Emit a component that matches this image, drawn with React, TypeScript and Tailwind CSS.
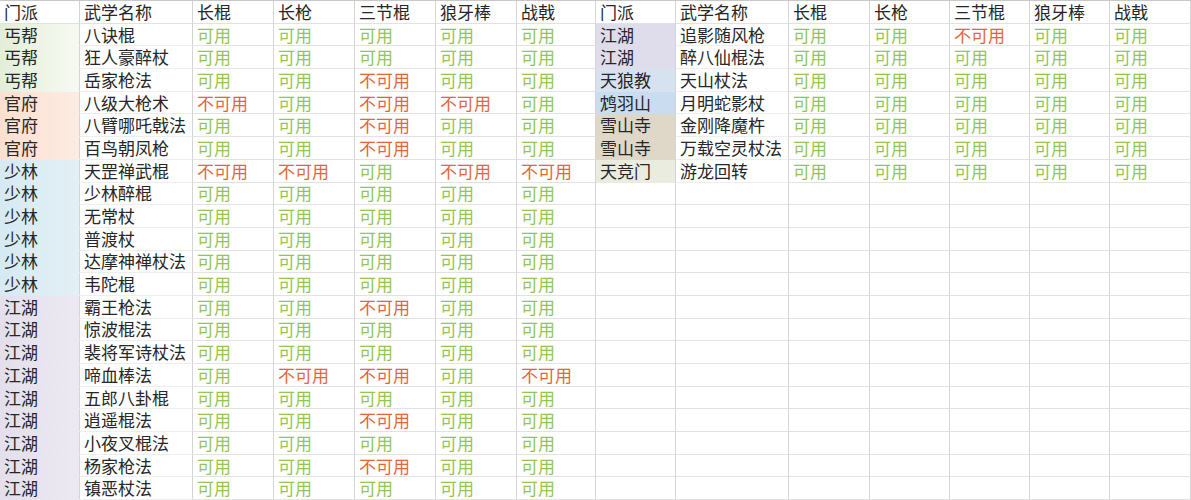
import React from "react";

const weapons = ["长棍", "长枪", "三节棍", "狼牙棒", "战戟"];

// 1 = 可用, 0 = 不可用
const leftRows: [string, string, number[]][] = [
  ["丐帮", "八诀棍", [1, 1, 1, 1, 1]],
  ["丐帮", "狂人豪醉杖", [1, 1, 1, 1, 1]],
  ["丐帮", "岳家枪法", [1, 1, 0, 1, 1]],
  ["官府", "八级大枪术", [0, 1, 0, 0, 1]],
  ["官府", "八臂哪吒戟法", [1, 1, 0, 1, 1]],
  ["官府", "百鸟朝凤枪", [1, 1, 0, 1, 1]],
  ["少林", "天罡禅武棍", [0, 0, 1, 0, 0]],
  ["少林", "少林醉棍", [1, 1, 1, 1, 1]],
  ["少林", "无常杖", [1, 1, 1, 1, 1]],
  ["少林", "普渡杖", [1, 1, 1, 1, 1]],
  ["少林", "达摩神禅杖法", [1, 1, 1, 1, 1]],
  ["少林", "韦陀棍", [1, 1, 1, 1, 1]],
  ["江湖", "霸王枪法", [1, 1, 0, 1, 1]],
  ["江湖", "惊波棍法", [1, 1, 1, 1, 1]],
  ["江湖", "裴将军诗杖法", [1, 1, 1, 1, 1]],
  ["江湖", "啼血棒法", [1, 0, 0, 1, 0]],
  ["江湖", "五郎八卦棍", [1, 1, 1, 1, 1]],
  ["江湖", "逍遥棍法", [1, 1, 0, 1, 1]],
  ["江湖", "小夜叉棍法", [1, 1, 1, 1, 1]],
  ["江湖", "杨家枪法", [1, 1, 0, 1, 1]],
  ["江湖", "镇恶杖法", [1, 1, 1, 1, 1]],
];

const rightRows: [string, string, number[]][] = [
  ["江湖", "追影随风枪", [1, 1, 0, 1, 1]],
  ["江湖", "醉八仙棍法", [1, 1, 1, 1, 1]],
  ["天狼教", "天山杖法", [1, 1, 1, 1, 1]],
  ["鸩羽山", "月明蛇影杖", [1, 1, 1, 1, 1]],
  ["雪山寺", "金刚降魔杵", [1, 1, 1, 1, 1]],
  ["雪山寺", "万载空灵杖法", [1, 1, 1, 1, 1]],
  ["天竞门", "游龙回转", [1, 1, 1, 1, 1]],
];

const leftTint: Record<string, string> = {
  丐帮: "bg-gradient-to-r from-[#e3eed8] to-[#f7faf3]",
  官府: "bg-gradient-to-r from-[#fbe0cf] to-[#fcece2]",
  少林: "bg-gradient-to-r from-[#d6eaf3] to-[#e3f0f5]",
  江湖: "bg-gradient-to-r from-[#e3dfec] to-[#ece9f2]",
};

const rightTint: Record<string, string> = {
  江湖: "bg-[#dfddec]",
  天狼教: "bg-[#d7e2f1]",
  鸩羽山: "bg-[#cadcf0]",
  雪山寺: "bg-[#dfd8c9]",
  天竞门: "bg-[#e9ecdf]",
};

const cell = "h-[22.7px] flex items-center pl-[4px] border-b border-[#e2e2e2] border-r border-r-[#d4d4d4] whitespace-nowrap";

function Status({ ok }: { ok: number }) {
  return ok ? (
    <span className="text-[#93c552]">可用</span>
  ) : (
    <span className="text-[#e2663a]">不可用</span>
  );
}

function Header() {
  return (
    <>
      <div className={cell}>门派</div>
      <div className={cell}>武学名称</div>
      {weapons.map((w) => (
        <div key={w} className={cell}>
          {w}
        </div>
      ))}
    </>
  );
}

function Row({ data, side }: { data?: [string, string, number[]]; side: "l" | "r" }) {
  const tint = data ? (side === "l" ? leftTint[data[0]] : rightTint[data[0]]) : "";
  return (
    <>
      <div className={`${cell} ${data ? "border-b-transparent " + tint : ""}`}>{data?.[0]}</div>
      <div className={`${cell} ${data ? "border-b-[#eeeeee]" : ""}`}>{data?.[1]}</div>
      {[0, 1, 2, 3, 4].map((i) => (
        <div key={i} className={cell}>
          {data ? <Status ok={data[2][i]} /> : null}
        </div>
      ))}
    </>
  );
}

export default function App() {
  return (
    <div
      className="w-[1191px] h-[500px] overflow-hidden bg-white text-[#262626] text-[17px] leading-[20px] border-t border-[#c8c8c8]"
      style={{ fontFamily: '"Noto Sans CJK SC", "Noto Sans", sans-serif' }}
    >
      <div className="grid grid-cols-[80px_113px_81px_81px_81px_81px_79px_80px_113px_81px_80px_80px_80px_81px]">
        <Header />
        <Header />
        {leftRows.map((r, i) => (
          <React.Fragment key={i}>
            <Row data={r} side="l" />
            <Row data={rightRows[i]} side="r" />
          </React.Fragment>
        ))}
      </div>
    </div>
  );
}
